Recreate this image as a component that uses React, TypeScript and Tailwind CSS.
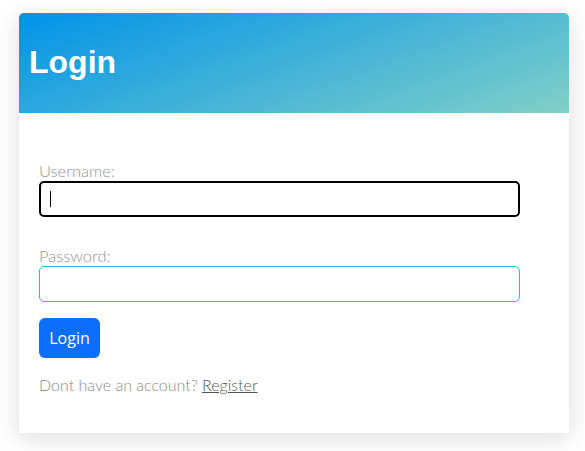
import React from 'react';

const App: React.FC = () => {
    return (
        <div className="min-h-[451px] w-[585px] bg-white pt-[13px] pl-[19px]" style={{ fontFamily: 'Lato, "Open Sans", sans-serif' }}>
            <div className="w-[550px] h-[420px] bg-white rounded-t-[5px] shadow-[0_5px_26px_rgba(0,0,0,0.14)]">
                <div className="h-[100px] rounded-t-[5px] bg-[#0093E9] bg-[linear-gradient(160deg,#0093E9_0%,#80D0C7_100%)] flex items-center pl-[10px]">
                    <h1 className="text-white text-[32px] font-bold leading-none mt-[-2px]" style={{ fontFamily: '"Liberation Sans", Arial, sans-serif' }}>
                        Login
                    </h1>
                </div>
                <div className="px-5 pt-[48px]">
                    <label className="block text-[16.5px] leading-[20px] font-light text-[#929292]">Username:</label>
                    <div className="relative">
                        <input
                            type="text"
                            className="block w-[481px] h-[36px] rounded-[5px] border-2 border-black outline-none px-2"
                        />
                        <span className="absolute left-[11px] top-[10px] w-px h-[16px] bg-black" />
                    </div>
                    <label className="block mt-[29px] text-[16.5px] leading-[20px] font-light text-[#929292]">Password:</label>
                    <input
                        type="password"
                        className="block w-[481px] h-[36px] rounded-[5px] border border-[#35b3dc] outline-none px-2"
                    />
                    <button
                        className="mt-4 h-[40px] w-[61px] rounded-[6px] bg-[#0d6efd] text-white text-[16px]"
                        style={{ fontFamily: '"Open Sans", sans-serif' }}
                    >
                        Login
                    </button>
                    <p className="mt-[15px] text-[16px] leading-[24px] font-light text-[#8a8a8a]">
                        Dont have an account? <a href="#" className="underline text-[#555]">Register</a>
                    </p>
                </div>
            </div>
        </div>
    );
};

export default App;
